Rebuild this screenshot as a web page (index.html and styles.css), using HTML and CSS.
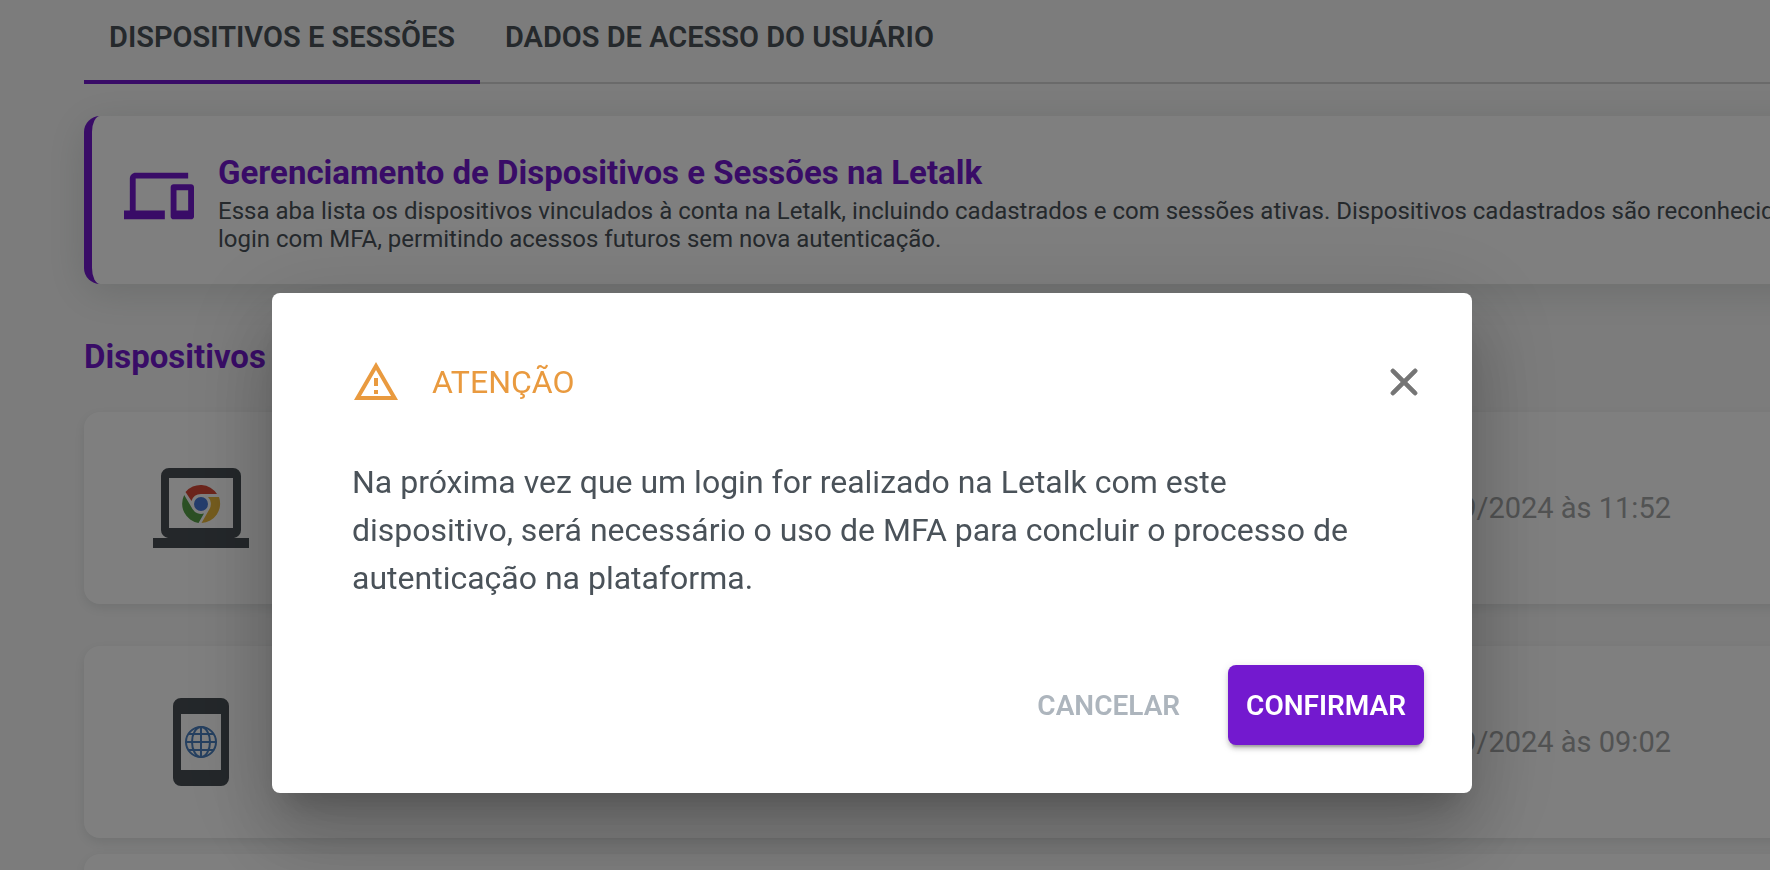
FILE: index.html
```html
<!DOCTYPE html>
<html lang="pt-BR">
<head>
<meta charset="utf-8">
<meta name="viewport" content="width=device-width, initial-scale=1">
<title>Dispositivos e Sessões</title>
<link rel="stylesheet" href="styles.css">
</head>
<body>
<main class="page">
  <div class="tabs" role="tablist">
    <button class="tab tab-active" type="button" role="tab" aria-selected="true">DISPOSITIVOS E SESSÕES</button>
    <button class="tab" type="button" role="tab" aria-selected="false">DADOS DE ACESSO DO USUÁRIO</button>
  </div>

  <section class="info">
    <svg class="info-icon" viewBox="0 0 24 24" aria-hidden="true"><path d="M4 6h18V4H4c-1.100 0-2 .9-2 2v11H0v3h14v-3H4V6zm19 2h-6c-.55 0-1 .45-1 1v10c0 .55.45 1 1 1h6c.55 0 1-.45 1-1V9c0-.55-.45-1-1-1zm-1 9h-4v-7h4v7z"/></svg>
    <div class="info-text">
      <h1 class="heading">Gerenciamento de Dispositivos e Sessões na Letalk</h1>
      <p class="info-desc">Essa aba lista os dispositivos vinculados à conta na Letalk, incluindo cadastrados e com sessões ativas. Dispositivos cadastrados são reconhecidos<br>login com MFA, permitindo acessos futuros sem nova autenticação.</p>
    </div>
  </section>

  <section class="devices">
    <h2 class="heading devices-title">Dispositivos</h2>
    <article class="device device-current">
      <svg class="laptop" viewBox="0 0 96 80" role="img" aria-label="Computador com Chrome">
        <path class="device-body" fill-rule="evenodd" d="M16 0h64a8 8 0 0 1 8 8v54a8 8 0 0 1-7 8h15v10H0V70h15a8 8 0 0 1-7-8V8a8 8 0 0 1 8-8zM16 10v50h64V10z"/>
        <g transform="translate(48 36)">
          <path fill="#d94a38" d="M-15.500-12A19.500 19.500 0 0 1 16-10H0A10 10 0 0 0-9.500-3z"/>
          <path fill="#e8b73c" d="M7-7H18A19.500 19.500 0 0 1 .5 19L8.500 5A10 10 0 0 0 7-7z"/>
          <path fill="#57a048" d="M-16.800-9A19.500 19.500 0 0 0-2.500 19L3 9.500A10 10 0 0 1-8.500 5z"/>
          <circle r="7" fill="#4a7ad8"/>
        </g>
      </svg>
      <p class="device-date">09/2024 às 11:52</p>
    </article>
    <article class="device">
      <svg class="phone" viewBox="0 0 56 88" role="img" aria-label="Celular">
        <path class="device-body" fill-rule="evenodd" d="M8 0h40a8 8 0 0 1 8 8v72a8 8 0 0 1-8 8H8a8 8 0 0 1-8-8V8a8 8 0 0 1 8-8zM8 16v56h40V16z"/>
        <g class="globe"><circle cx="28" cy="44" r="15"/><ellipse cx="28" cy="44" rx="9" ry="15"/><path d="M28 29v30M12 44h32M15 36h26M15 52h26"/></g>
      </svg>
      <p class="device-date">09/2024 às 09:02</p>
    </article>
    <article class="device"></article>
  </section>
</main>

<div class="backdrop">
  <div class="dialog" role="dialog" aria-modal="true" aria-labelledby="dialog-title" aria-describedby="dialog-text">
    <header class="dialog-header">
      <svg class="warning" viewBox="0 0 24 24" aria-hidden="true"><path d="M12 5.990L19.530 19H4.470L12 5.990M12 2L1 21h22L12 2zm1 14h-2v2h2v-2zm0-6h-2v4h2v-4z"/></svg>
      <h2 class="dialog-title" id="dialog-title">ATENÇÃO</h2>
      <button class="close" type="button" aria-label="Fechar"><svg viewBox="0 0 24 24" aria-hidden="true"><path d="M18.300 5.710a1 1 0 0 0-1.410 0L12 10.590 7.110 5.700A1 1 0 0 0 5.700 7.110L10.590 12 5.700 16.890a1 1 0 0 0 1.410 1.410L12 13.410l4.890 4.890a1 1 0 0 0 1.410-1.410L13.410 12l4.890-4.890a1 1 0 0 0 0-1.400z"/></svg></button>
    </header>
    <p class="dialog-text" id="dialog-text">Na próxima vez que um login for realizado na Letalk com este dispositivo, será necessário o uso de MFA para concluir o processo de autenticação na plataforma.</p>
    <footer class="dialog-actions">
      <button class="btn btn-cancel" type="button">CANCELAR</button>
      <button class="btn btn-confirm" type="button">CONFIRMAR</button>
    </footer>
  </div>
</div>
</body>
</html>
```
FILE: styles.css
```css
:root {
  --purple: #7319cf;
  --ink: #4a5259;
  --orange: #e99a3f;
}

* { box-sizing: border-box; }

body {
  margin: 0;
  height: 100vh;
  overflow: hidden;
  background: #f9f9f9;
  color: var(--ink);
  font-family: Roboto, "Liberation Sans", sans-serif;
}

h1, h2, p { margin: 0; }

button {
  border: 0;
  background: none;
  font-family: inherit;
  cursor: pointer;
}

/* The content column bleeds past the right edge of the window. */
.page {
  height: 100vh;
  margin-right: -80px;
  padding-left: 84px;
  overflow: hidden;
}

.tabs {
  display: flex;
  box-shadow: inset 0 -2px #d4d4d4;
}

.tab {
  padding: 17px 25px 23px;
  border-bottom: 4px solid transparent;
  color: var(--ink);
  font-size: 29px;
  font-weight: 600;
  line-height: 40px;
  white-space: nowrap;
}

.tab-active { border-color: var(--purple); }

.info {
  display: flex;
  align-items: flex-start;
  gap: 24px;
  margin-top: 32px;
  padding: 35px 0 31px 32px;
  border-left: 8px solid var(--purple);
  border-radius: 16px 0 0 16px;
  background: #fff;
  box-shadow: 0 8px 40px rgba(60, 75, 70, 0.17);
}

.info-icon {
  flex: none;
  width: 70px;
  height: 70px;
  margin-top: 10px;
  fill: var(--purple);
}

.info-text { white-space: nowrap; }

.heading {
  color: var(--purple);
  font-size: 33px;
  font-weight: 700;
  line-height: 44px;
}

.info-desc {
  padding-top: 2px;
  font-size: 24px;
  line-height: 28px;
}

.devices { padding-top: 51px; }

.devices-title { margin-bottom: 33px; }

.device {
  display: flex;
  align-items: center;
  justify-content: space-between;
  height: 192px;
  margin-bottom: 16px;
  padding: 0 179px 0 69px;
  border-radius: 16px 0 0 16px;
  background: #fff;
  box-shadow: 0 4px 12px rgba(60, 75, 70, 0.12);
}

.device-current { margin-bottom: 42px; }

.device-body { fill: #484f55; }

.laptop {
  width: 96px;
  height: 80px;
}

.phone {
  width: 56px;
  height: 88px;
  margin-left: 20px;
}

.globe {
  fill: none;
  stroke: #4b80c0;
  stroke-width: 2;
}

.device-date {
  color: #a4a6a7;
  font-size: 29px;
  line-height: 40px;
}

.backdrop {
  position: fixed;
  inset: 0;
  padding: 293px 298px 0 272px;
  background: rgba(0, 0, 0, 0.5);
}

.dialog {
  padding: 65px 48px 48px 80px;
  border-radius: 8px;
  background: #fff;
  box-shadow:
    0 22px 30px -14px rgba(0, 0, 0, 0.2),
    0 48px 76px 6px rgba(0, 0, 0, 0.14),
    0 18px 92px 16px rgba(0, 0, 0, 0.12);
}

.dialog-header {
  display: flex;
  align-items: center;
}

.warning {
  width: 48px;
  height: 48px;
  margin-right: 32px;
  fill: var(--orange);
}

.dialog-title {
  color: var(--orange);
  font-size: 32px;
  font-weight: 400;
  line-height: 48px;
}

.close {
  margin: 0 -4px 0 auto;
  padding: 0;
}

.close svg {
  display: block;
  width: 48px;
  height: 48px;
  fill: #757575;
  stroke: #757575;
  stroke-width: 0.4;
}

.dialog-text {
  max-width: 1024px;
  padding: 52px 0 63px;
  font-size: 32px;
  line-height: 48px;
}

.dialog-actions {
  display: flex;
  justify-content: flex-end;
  gap: 32px;
}

.btn {
  height: 80px;
  padding: 0 16px;
  border-radius: 8px;
  font-size: 28px;
  font-weight: 600;
}

.btn-cancel { color: #adb5bd; }

.btn-confirm {
  padding: 0 18px;
  background: var(--purple);
  color: #fff;
  box-shadow:
    0 6px 2px -4px rgba(0, 0, 0, 0.2),
    0 4px 4px rgba(0, 0, 0, 0.14),
    0 2px 10px rgba(0, 0, 0, 0.12);
}
```
